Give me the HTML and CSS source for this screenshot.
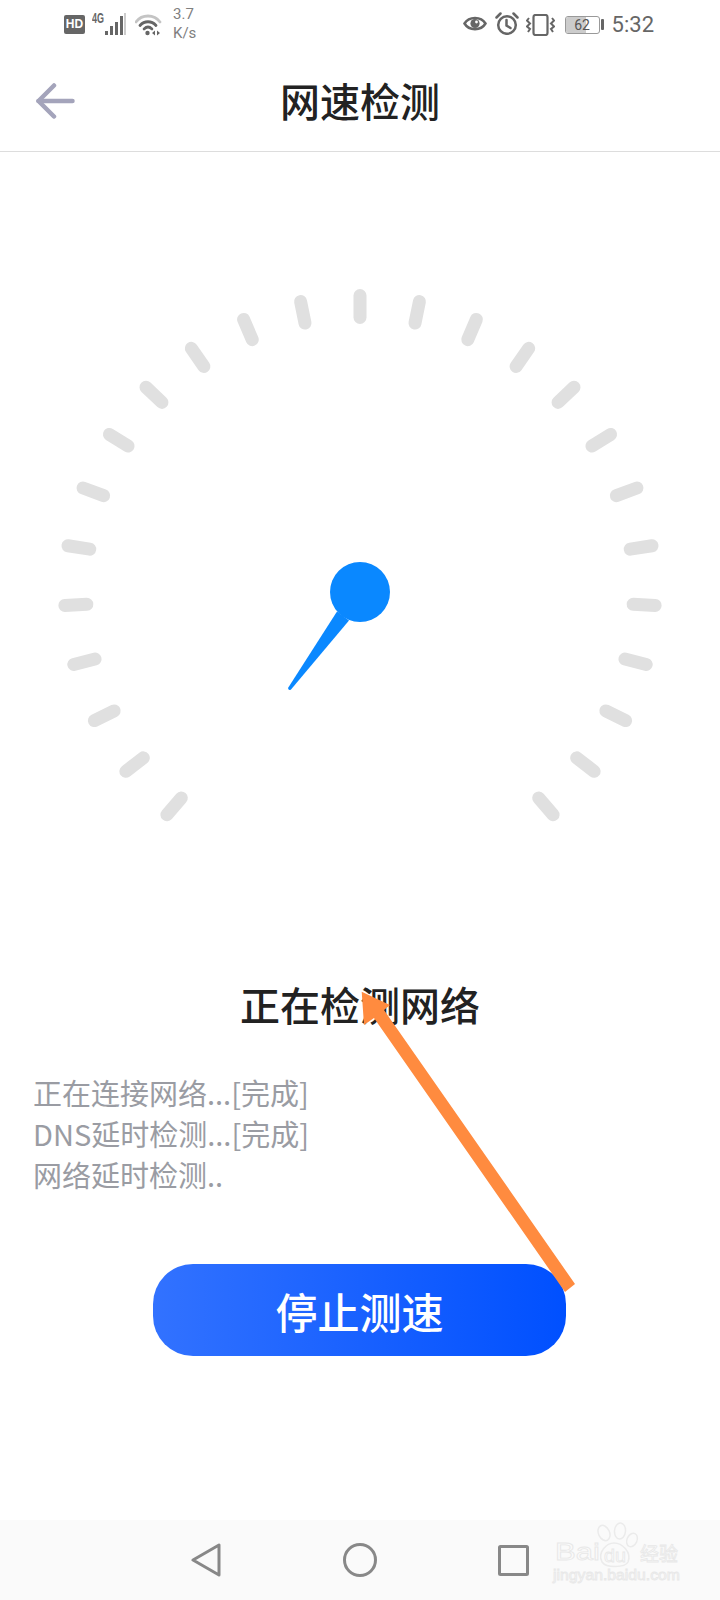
FILE: index.html
```html
<!DOCTYPE html>
<html lang="zh-CN">
<head>
    <meta charset="UTF-8">
    <meta name="viewport" content="width=device-width, initial-scale=1.0">
    <title>网速检测</title>
    <link rel="stylesheet" href="styles.css">
</head>
<body>
    <div class="page">
        <!-- status bar -->
        <div class="status-bar">
            <div class="status-left">
                <span class="hd-badge">HD</span>
                <svg class="signal-icon" width="34" height="30" viewBox="0 -3 34 30">
                    <text class="signal-label" x="0" y="11" textLength="12" lengthAdjust="spacingAndGlyphs">4G</text>
                    <rect x="13" y="19" width="3" height="4" fill="#666"/>
                    <rect x="18" y="14" width="3" height="9" fill="#666"/>
                    <rect x="23" y="10" width="3" height="13" fill="#666"/>
                    <rect x="28" y="4" width="3" height="19" fill="#666"/>
                    <rect x="32" y="1" width="2" height="22" fill="#ccc"/>
                </svg>
                <svg class="wifi-icon" width="27" height="22" viewBox="0 0 27 22" fill="none" stroke-linecap="round">
                    <path d="M1 8C7 0 19 0 25 8" stroke="#c4c4c4" stroke-width="2.800"/>
                    <path d="M5 11.500C9.500 6.500 16.500 6.500 21 11.500" stroke="#666" stroke-width="2.800"/>
                    <path d="M9 15C11.500 12.500 14.500 12.500 17 15" stroke="#666" stroke-width="2.600"/>
                    <circle cx="12.500" cy="19" r="2.200" fill="#666"/>
                    <path d="M20 16.500v5l-3-2.500z M22 16.500v5l3-2.500z" fill="#666"/>
                </svg>
                <div class="net-speed">3.7<br>K/s</div>
            </div>
            <div class="status-right">
                <svg class="eye-icon" width="24" height="17" viewBox="0 0 24 17" fill="none">
                    <path d="M1.500 8.500C6 1 18 1 22.500 8.500C18 16 6 16 1.500 8.500Z" stroke="#666" stroke-width="2.500"/>
                    <circle cx="12" cy="8.500" r="4.600" fill="#666"/>
                    <circle cx="13.500" cy="7" r="1.400" fill="#fff"/>
                </svg>
                <svg class="alarm-icon" width="24" height="23" viewBox="0 0 24 23" fill="none" stroke="#666" stroke-width="2.500" stroke-linecap="round">
                    <circle cx="12" cy="13" r="8.800"/>
                    <path d="M11.500 8v5.500l4 2.500"/>
                    <path d="M1.500 5.500L5.500 1.500M22.500 5.500L18.500 1.500"/>
                </svg>
                <svg class="vibrate-icon" width="29" height="22" viewBox="0 0 29 22" fill="none" stroke="#666" stroke-width="2.200">
                    <rect x="7.500" y="1" width="14" height="20" rx="2"/>
                    <path d="M3 4L1 6.500L4 9.500L1 12.500L4 15L2 18" stroke-width="2"/>
                    <path d="M26 4L28 6.500L25 9.500L28 12.500L25 15L27 18" stroke-width="2"/>
                </svg>
                <div class="battery">
                    <div class="battery-body">
                        <div class="battery-fill" style="width: 62%"></div>
                        <span class="battery-num">62</span>
                    </div>
                    <div class="battery-nub"></div>
                </div>
                <div class="clock">5:32</div>
            </div>
        </div>

        <!-- title row -->
        <div class="top-bar">
            <svg class="back-arrow" width="40" height="38" viewBox="0 0 40 38" fill="none" stroke="#a4a4bb" stroke-width="4.500" stroke-linecap="round" stroke-linejoin="round">
                <path d="M2.500 19H36.500"/>
                <path d="M18 3.500L2.500 19L18 34.500"/>
            </svg>
            <h1 class="page-title">网速检测</h1>
        </div>

        <!-- speed dial -->
        <svg class="dial" width="720" height="823" viewBox="0 0 720 823">
            <g class="ticks">
                <line x1="360" y1="143.500" x2="360" y2="165.500" transform="rotate(-139.200 360 439)"/>
                <line x1="360" y1="143.500" x2="360" y2="165.500" transform="rotate(-127.600 360 439)"/>
                <line x1="360" y1="143.500" x2="360" y2="165.500" transform="rotate(-116 360 439)"/>
                <line x1="360" y1="143.500" x2="360" y2="165.500" transform="rotate(-104.400 360 439)"/>
                <line x1="360" y1="143.500" x2="360" y2="165.500" transform="rotate(-92.800 360 439)"/>
                <line x1="360" y1="143.500" x2="360" y2="165.500" transform="rotate(-81.200 360 439)"/>
                <line x1="360" y1="143.500" x2="360" y2="165.500" transform="rotate(-69.600 360 439)"/>
                <line x1="360" y1="143.500" x2="360" y2="165.500" transform="rotate(-58 360 439)"/>
                <line x1="360" y1="143.500" x2="360" y2="165.500" transform="rotate(-46.400 360 439)"/>
                <line x1="360" y1="143.500" x2="360" y2="165.500" transform="rotate(-34.800 360 439)"/>
                <line x1="360" y1="143.500" x2="360" y2="165.500" transform="rotate(-23.200 360 439)"/>
                <line x1="360" y1="143.500" x2="360" y2="165.500" transform="rotate(-11.600 360 439)"/>
                <line x1="360" y1="143.500" x2="360" y2="165.500"/>
                <line x1="360" y1="143.500" x2="360" y2="165.500" transform="rotate(11.600 360 439)"/>
                <line x1="360" y1="143.500" x2="360" y2="165.500" transform="rotate(23.200 360 439)"/>
                <line x1="360" y1="143.500" x2="360" y2="165.500" transform="rotate(34.800 360 439)"/>
                <line x1="360" y1="143.500" x2="360" y2="165.500" transform="rotate(46.400 360 439)"/>
                <line x1="360" y1="143.500" x2="360" y2="165.500" transform="rotate(58 360 439)"/>
                <line x1="360" y1="143.500" x2="360" y2="165.500" transform="rotate(69.600 360 439)"/>
                <line x1="360" y1="143.500" x2="360" y2="165.500" transform="rotate(81.200 360 439)"/>
                <line x1="360" y1="143.500" x2="360" y2="165.500" transform="rotate(92.800 360 439)"/>
                <line x1="360" y1="143.500" x2="360" y2="165.500" transform="rotate(104.400 360 439)"/>
                <line x1="360" y1="143.500" x2="360" y2="165.500" transform="rotate(116 360 439)"/>
                <line x1="360" y1="143.500" x2="360" y2="165.500" transform="rotate(127.600 360 439)"/>
                <line x1="360" y1="143.500" x2="360" y2="165.500" transform="rotate(139.200 360 439)"/>
            </g>
            <circle cx="360" cy="440" r="30" fill="#0a88ff"/>
            <path d="M337 459.500L349 468.500L291 537.500Q288.500 539 288 536Z" fill="#0a88ff"/>
        </svg>

        <h2 class="check-title">正在检测网络</h2>
        <div class="check-log">
            <p>正在连接网络...[完成]</p>
            <p>DNS延时检测...[完成]</p>
            <p>网络延时检测..</p>
        </div>

        <button type="button" class="stop-btn">停止测速</button>

        <!-- bottom navigation -->
        <div class="nav-bar">
            <svg width="30" height="34" viewBox="0 0 30 34" fill="none" stroke="#888" stroke-width="3" stroke-linejoin="round">
                <path d="M28 2V32L2 17Z"/>
            </svg>
            <svg width="34" height="36" viewBox="0 0 34 36" fill="none" stroke="#888" stroke-width="3">
                <circle cx="17" cy="18" r="15.500"/>
            </svg>
            <svg width="31" height="31" viewBox="0 0 31 31" fill="none" stroke="#888" stroke-width="3" stroke-linejoin="round">
                <rect x="1.500" y="1.500" width="28" height="28" rx="1"/>
            </svg>
        </div>
    </div>

    <!-- annotation arrow drawn over the page -->
    <svg class="note-arrow" width="225" height="312" viewBox="355 985 225 312">
        <polygon points="361.700,991.700 390,1005 384,1010 575,1284 565,1292 374,1018 364,1025" fill="#ff8b3f"/>
    </svg>

    <!-- watermark -->
    <svg class="watermark" width="132" height="68" viewBox="550 1520 132 68">
        <g class="wm-paw">
            <ellipse cx="604" cy="1533" rx="5.500" ry="8" transform="rotate(-25 604 1533)"/>
            <ellipse cx="620" cy="1531" rx="5.500" ry="8" transform="rotate(5 620 1531)"/>
            <ellipse cx="632" cy="1540" rx="5" ry="7" transform="rotate(25 632 1540)"/>
            <path d="M602 1562C597 1552 607 1543 614 1543C622 1543 632 1552 628 1562C625 1568 606 1568 602 1562Z"/>
        </g>
        <text class="wm-text" x="555" y="1560" font-size="24" textLength="45" lengthAdjust="spacingAndGlyphs">Bai</text>
        <text class="wm-text" x="604" y="1562" font-size="19" textLength="22" lengthAdjust="spacingAndGlyphs">du</text>
        <text class="wm-text wm-cjk" x="640" y="1561" font-size="19" textLength="38" lengthAdjust="spacingAndGlyphs">经验</text>
        <text class="wm-text" x="553" y="1580" font-size="14" textLength="127" lengthAdjust="spacingAndGlyphs">jingyan.baidu.com</text>
    </svg>
</body>
</html>
```

FILE: styles.css
```css
html, body {
    margin: 0;
    padding: 0;
    background-color: #fff;
}

.page {
    position: relative;
    display: flex;
    flex-direction: column;
    width: 720px;
    height: 1600px;
    font-family: "Noto Sans CJK SC", "Noto Sans", sans-serif;
}

/* Status bar */
.status-bar {
    display: flex;
    justify-content: space-between;
    align-items: center;
    height: 48px;
    padding: 0 66px 0 64px;
    color: #666;
}

.status-left,
.status-right {
    display: flex;
    align-items: center;
}

.status-right {
    margin-top: 1px;
}

.hd-badge {
    width: 21px;
    height: 19px;
    margin-top: 1px;
    border-radius: 2px;
    background-color: #666;
    color: #fff;
    font-family: "Liberation Sans", sans-serif;
    font-size: 12px;
    font-weight: bold;
    line-height: 19px;
    text-align: center;
}

.signal-icon {
    margin-left: 7px;
    margin-bottom: 1px;
}

.signal-label {
    fill: #666;
    font-family: "Liberation Sans", sans-serif;
    font-size: 14px;
    font-weight: bold;
}

.wifi-icon {
    margin-left: 9px;
    margin-top: 1px;
}

.net-speed {
    margin-left: 11px;
    color: #808080;
    font-family: Roboto, sans-serif;
    font-size: 15px;
    line-height: 19px;
}

.eye-icon {
    margin-bottom: 2px;
}

.alarm-icon {
    margin-left: 8px;
    margin-bottom: 3px;
}

.vibrate-icon {
    margin-left: 7px;
}

.battery {
    display: flex;
    align-items: center;
    margin-left: 10px;
}

.battery-body {
    position: relative;
    box-sizing: border-box;
    width: 35px;
    height: 18px;
    border: 1px solid #999;
    border-radius: 3px;
    overflow: hidden;
}

.battery-fill {
    height: 100%;
    background-color: #ccc;
}

.battery-num {
    position: absolute;
    top: 0;
    left: 0;
    width: 100%;
    color: #555;
    font-family: Roboto, sans-serif;
    font-size: 14px;
    line-height: 16px;
    text-align: center;
}

.battery-nub {
    width: 3px;
    height: 11px;
    margin-left: 1px;
    border-radius: 1px;
    background-color: #666;
}

.clock {
    margin-left: 8px;
    font-family: Roboto, sans-serif;
    font-size: 22px;
    line-height: 26px;
}

/* Title row */
.top-bar {
    display: flex;
    justify-content: center;
    align-items: center;
    position: relative;
    height: 104px;
    border-bottom: 1px solid #ddd;
    box-sizing: border-box;
}

.back-arrow {
    position: absolute;
    left: 36px;
    top: 34px;
}

.page-title {
    margin: 0;
    color: #222;
    font-size: 40px;
    font-weight: 500;
    line-height: 56px;
}

/* Dial */
.dial {
    display: block;
    flex-shrink: 0;
}

.ticks line {
    stroke: #e0e0e0;
    stroke-width: 13;
    stroke-linecap: round;
}

/* Check state */
.check-title {
    margin: 1px 0 0;
    color: #222;
    font-size: 40px;
    font-weight: 500;
    line-height: 56px;
    text-align: center;
}

.check-log {
    margin-top: 40px;
    padding-left: 33px;
    color: #9a9ca3;
    font-size: 29px;
    line-height: 41px;
}

.check-log p {
    margin: 0;
}

.stop-btn {
    display: block;
    width: 413px;
    height: 92px;
    margin: 69px 0 0 153px;
    padding: 0;
    border: none;
    border-radius: 40px;
    background: linear-gradient(90deg, #3272ff, #0050ff);
    color: #fff;
    font-family: inherit;
    font-size: 42px;
    font-weight: 500;
}

/* Bottom navigation */
.nav-bar {
    display: flex;
    align-items: center;
    gap: 121.500px;
    height: 80px;
    margin-top: auto;
    padding-left: 191px;
    background-color: #fafafa;
}

/* Overlays */
.note-arrow {
    position: absolute;
    left: 355px;
    top: 985px;
    filter: blur(0.5px);
}

.watermark {
    position: absolute;
    left: 550px;
    top: 1520px;
}

.wm-paw {
    fill: none;
    stroke: #ebebeb;
    stroke-width: 1.500;
}

.wm-text {
    fill: #fbfbfb;
    stroke: #e8e8e8;
    stroke-width: 0.800;
    font-family: "Liberation Sans", sans-serif;
}

.wm-cjk {
    font-family: "Noto Sans CJK SC", sans-serif;
}
```
